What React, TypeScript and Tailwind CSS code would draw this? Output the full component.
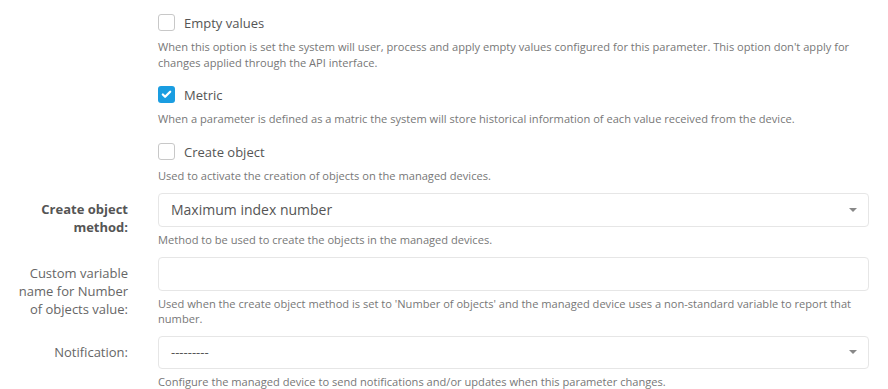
import { Check } from "lucide-react";

function Checkbox({ checked, label }: { checked?: boolean; label: string }) {
  return (
    <div className="flex items-center gap-[9px] h-[17px]">
      {checked ? (
        <span className="w-[17px] h-[17px] rounded-[3px] bg-[#1a9de1] flex items-center justify-center">
          <Check size={11} strokeWidth={5} className="text-white" />
        </span>
      ) : (
        <span className="w-[17px] h-[17px] rounded-[3px] border border-[#c8c8c8] bg-white" />
      )}
      <span className="text-[13px] leading-[18px] text-[#555]">{label}</span>
    </div>
  );
}

function Help({ children }: { children: React.ReactNode }) {
  return <p className="text-[11.1px] leading-[15.7px] text-[#777]">{children}</p>;
}

function Caret() {
  return (
    <svg width="8" height="4" viewBox="0 0 8 4" className="text-[#888]">
      <path d="M0 0h8L4 4z" fill="currentColor" />
    </svg>
  );
}

function Row({ label, bold, children }: { label?: string; bold?: boolean; children: React.ReactNode }) {
  return (
    <div className="grid grid-cols-[128px_1fr] gap-x-[30px] pr-[19px]">
      <div
        className={`pl-[15px] pt-[7px] text-right text-[13px] leading-[18px] ${
          bold ? "font-bold text-[#555]" : "text-[#666]"
        }`}
      >
        {label}
      </div>
      <div>{children}</div>
    </div>
  );
}

export default function App() {
  return (
    <div className="w-[888px] h-[389px] overflow-hidden bg-white font-['Open_Sans',sans-serif] pt-[14px]">
      <div className="flex flex-col gap-[16px]">
        <Row>
          <Checkbox label="Empty values" />
          <div className="mt-[8px]">
            <Help>
              When this option is set the system will user, process and apply empty values configured for this parameter. This option don't apply for changes applied through the API interface.
            </Help>
          </div>
        </Row>
        <Row>
          <Checkbox checked label="Metric" />
          <div className="mt-[8px]">
            <Help>When a parameter is defined as a matric the system will store historical information of each value received from the device.</Help>
          </div>
        </Row>
        <Row>
          <Checkbox label="Create object" />
          <div className="mt-[8px]">
            <Help>Used to activate the creation of objects on the managed devices.</Help>
          </div>
        </Row>
      </div>

      <div className="flex flex-col gap-[9px] mt-[9px]">
        <Row label="Create object method:" bold>
          <div className="h-[34px] border border-[#e6e6e6] rounded-[4px] flex items-center justify-between pl-[12px] pr-[11px]">
            <span className="text-[14px] text-[#555]">Maximum index number</span>
            <Caret />
          </div>
          <div className="mt-[5px]">
            <Help>Method to be used to create the objects in the managed devices.</Help>
          </div>
        </Row>
        <Row label="Custom variable name for Number of objects value:">
          <div className="h-[34px] border border-[#e6e6e6] rounded-[4px]" />
          <div className="mt-[5px]">
            <Help>
              Used when the create object method is set to 'Number of objects' and the managed device uses a non-standard variable to report that number.
            </Help>
          </div>
        </Row>
        <Row label="Notification:">
          <div className="h-[33px] border border-[#e6e6e6] rounded-[4px] flex items-center justify-between pl-[12px] pr-[11px]">
            <span className="text-[13px] text-[#555]">---------</span>
            <Caret />
          </div>
          <div className="mt-[5px]">
            <Help>Configure the managed device to send notifications and/or updates when this parameter changes.</Help>
          </div>
        </Row>
      </div>
    </div>
  );
}
